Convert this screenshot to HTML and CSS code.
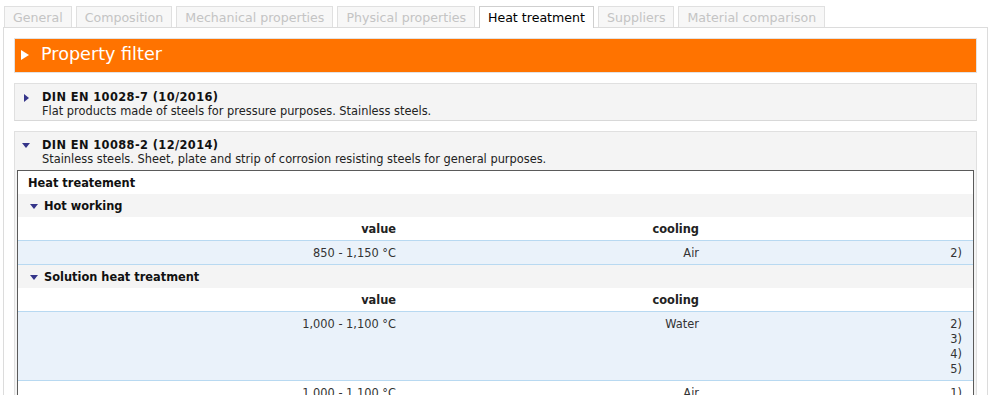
FILE: index.html
```html
<!DOCTYPE html>
<html lang="en">
<head>
  <meta charset="UTF-8">
  <title>Heat treatment</title>
  <link rel="stylesheet" href="styles.css">
</head>
<body>
  <ul class="tabs">
    <li>General</li>
    <li>Composition</li>
    <li>Mechanical properties</li>
    <li>Physical properties</li>
    <li class="active">Heat treatment</li>
    <li>Suppliers</li>
    <li>Material comparison</li>
  </ul>

  <div class="panel">
    <div class="filter-bar"><span class="arrow-right white"></span>Property filter</div>

    <div class="standard">
      <div class="standard-head">
        <span class="arrow-right"></span>
        <div>
          <div class="standard-title">DIN EN 10028-7 (10/2016)</div>
          <div>Flat products made of steels for pressure purposes. Stainless steels.</div>
        </div>
      </div>
    </div>

    <div class="standard open">
      <div class="standard-head">
        <span class="arrow-down"></span>
        <div>
          <div class="standard-title">DIN EN 10088-2 (12/2014)</div>
          <div>Stainless steels. Sheet, plate and strip of corrosion resisting steels for general purposes.</div>
        </div>
      </div>

      <div class="treatment">
        <div class="treatment-title">Heat treatement</div>

        <div class="group"><span class="arrow-down"></span>Hot working</div>
        <div class="row head">
          <div>value</div><div>cooling</div><div></div>
        </div>
        <div class="row data">
          <div>850 - 1,150 °C</div><div>Air</div><div>2)</div>
        </div>

        <div class="group"><span class="arrow-down"></span>Solution heat treatment</div>
        <div class="row head">
          <div>value</div><div>cooling</div><div></div>
        </div>
        <div class="row data">
          <div>1,000 - 1,100 °C</div><div>Water</div><div>2)<br>3)<br>4)<br>5)</div>
        </div>
        <div class="row">
          <div>1,000 - 1,100 °C</div><div>Air</div><div>1)</div>
        </div>
      </div>
    </div>
  </div>
</body>
</html>
```

FILE: styles.css
```css
body {
  margin: 0;
  font-family: 'DejaVu Sans', Verdana, sans-serif;
  font-size: 11.4px;
  color: #333;
  background: #fff;
  overflow: hidden;
}
.tabs {
  list-style: none;
  margin: 0;
  padding: 6px 0 0 4px;
  display: flex;
  gap: 4px;
  font-size: 12.6px;
}
.tabs li {
  height: 20px;
  line-height: 21px;
  padding: 0 8px;
  background: #f7f7f7;
  color: #c4c4c4;
  border: 1px solid #e0e0e0;
  border-bottom: none;
}
.tabs li.active {
  background: #fff;
  color: #000;
  border-color: #cfcfcf;
  position: relative;
  z-index: 1;
  height: 21px;
  margin-bottom: -1px;
}
.panel {
  margin: 0 4px 0 3px;
  border: 1px solid #dcdcdc;
  padding: 10px 10px 0;
  height: 400px;
}
.filter-bar {
  background: #ff7300;
  border: 1px solid #e2e2e2;
  color: #fff;
  font-size: 17.6px;
  box-sizing: border-box;
  height: 35px;
  padding: 0 0 4px 6px;
  display: flex;
  align-items: center;
}
.arrow-right {
  display: inline-block;
  width: 0;
  height: 0;
  border-top: 4px solid transparent;
  border-bottom: 4px solid transparent;
  border-left: 5px solid #35358a;
  margin: 0 13px 0 3px;
}
.arrow-right.white {
  border-top-width: 5px;
  border-bottom-width: 5px;
  border-left: 8px solid #fff;
  margin: 3px 12px 0 0;
}
.arrow-down {
  display: inline-block;
  width: 0;
  height: 0;
  border-left: 4px solid transparent;
  border-right: 4px solid transparent;
  border-top: 5px solid #35358a;
  margin-right: 6px;
}
.standard {
  margin-top: 10px;
  background: #f4f4f4;
  border: 1px solid #e0e0e0;
  border-bottom-color: #d8d8d8;
}
.standard-head {
  display: flex;
  align-items: flex-start;
  padding: 6px 0 2px 6px;
  line-height: 14px;
  color: #222;
}
.standard-head .arrow-right {
  margin-top: 4px;
}
.standard-head .arrow-down {
  margin: 5px 12px 0 1px;
}
.standard-title {
  font-weight: bold;
  color: #111;
  letter-spacing: 0.4px;
}
.treatment {
  background: #fff;
  border: 1px solid #5a5a5a;
  margin: 2px 2px 0;
}
.treatment-title {
  font-weight: bold;
  color: #111;
  height: 23px;
  line-height: 25px;
  padding-left: 10px;
}
.group {
  background: #f4f4f4;
  font-weight: bold;
  color: #111;
  box-sizing: border-box;
  height: 23px;
  padding: 1px 0 0 12px;
  display: flex;
  align-items: center;
}
.row {
  display: grid;
  grid-template-columns: 378px 303px 1fr;
  line-height: 15px;
  padding: 5px 0 3px;
}
.row > div {
  text-align: right;
}
.row > div:last-child {
  padding-right: 11px;
}
.row.head {
  font-weight: bold;
  color: #222;
}
.row.data {
  background: #eaf2fa;
  border-top: 1px solid #b8d9f1;
  border-bottom: 1px solid #b8d9f1;
}
```
